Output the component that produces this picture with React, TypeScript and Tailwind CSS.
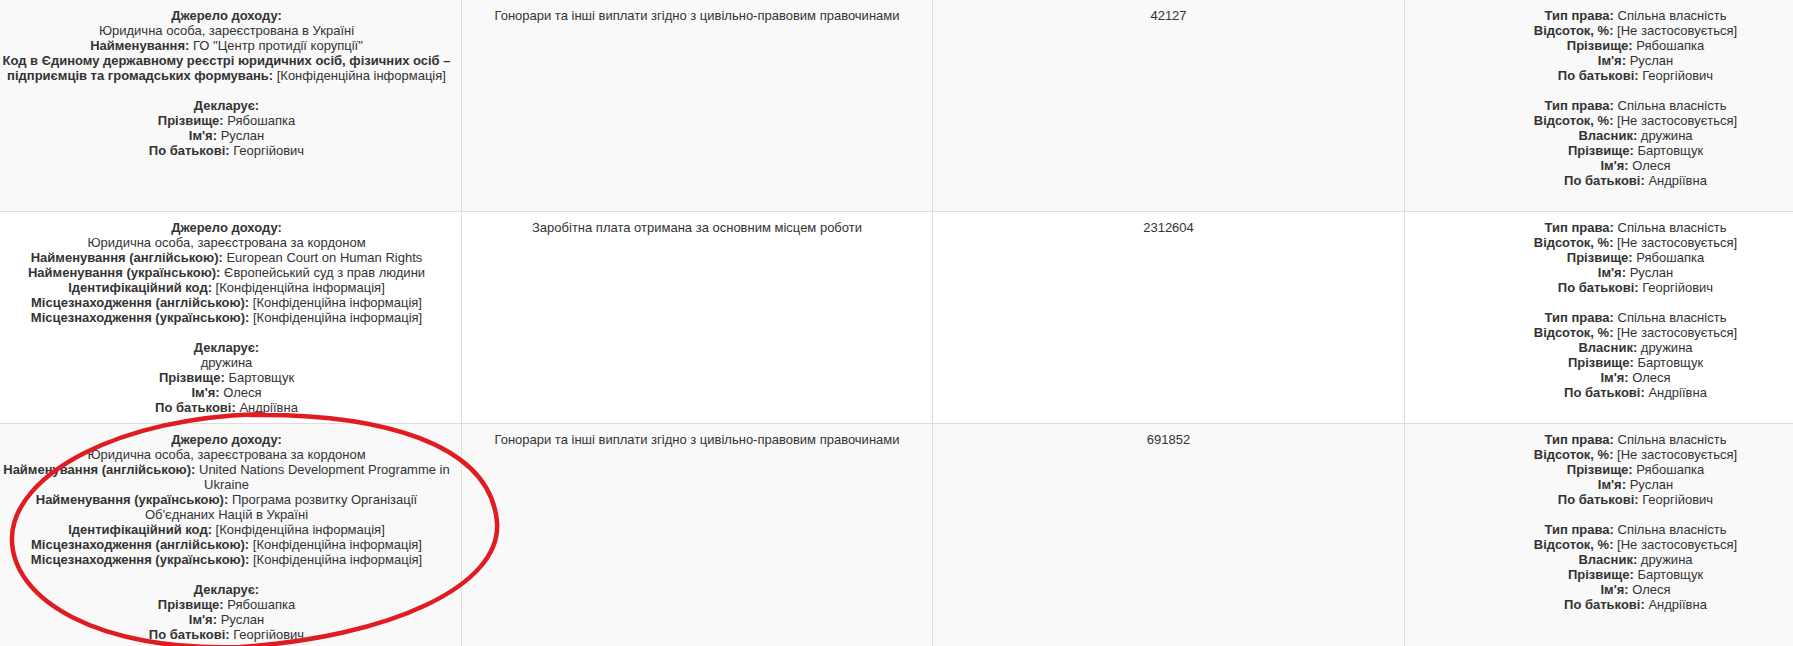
import React from "react";

type Line = { b?: string; t?: string } | null;

// label gets a colon appended, raw label is printed as is
const L = (b?: string, t?: string): Line => ({ b: b ? b + ":" : undefined, t });

const ownership: Line[] = [
  L("Тип права", "Спільна власність"),
  L("Відсоток, %", "[Не застосовується]"),
  L("Прізвище", "Рябошапка"),
  L("Ім'я", "Руслан"),
  L("По батькові", "Георгійович"),
  null,
  L("Тип права", "Спільна власність"),
  L("Відсоток, %", "[Не застосовується]"),
  L("Власник", "дружина"),
  L("Прізвище", "Бартовщук"),
  L("Ім'я", "Олеся"),
  L("По батькові", "Андріївна"),
  null,
];

const rows: { source: Line[]; kind: string; amount: string; striped: boolean }[] = [
  {
    striped: true,
    kind: "Гонорари та інші виплати згідно з цивільно-правовим правочинами",
    amount: "42127",
    source: [
      L("Джерело доходу"),
      L(undefined, "Юридична особа, зареєстрована в Україні"),
      L("Найменування", 'ГО "Центр протидії корупції"'),
      { b: "Код в Єдиному державному реєстрі юридичних осіб, фізичних осіб –" },
      { b: "підприємців та громадських формувань:", t: "[Конфіденційна інформація]" },
      null,
      L("Декларує"),
      L("Прізвище", "Рябошапка"),
      L("Ім'я", "Руслан"),
      L("По батькові", "Георгійович"),
    ],
  },
  {
    striped: false,
    kind: "Заробітна плата отримана за основним місцем роботи",
    amount: "2312604",
    source: [
      L("Джерело доходу"),
      L(undefined, "Юридична особа, зареєстрована за кордоном"),
      L("Найменування (англійською)", "European Court on Human Rights"),
      L("Найменування (українською)", "Європейський суд з прав людини"),
      L("Ідентифікаційний код", "[Конфіденційна інформація]"),
      L("Місцезнаходження (англійською)", "[Конфіденційна інформація]"),
      L("Місцезнаходження (українською)", "[Конфіденційна інформація]"),
      null,
      L("Декларує"),
      L(undefined, "дружина"),
      L("Прізвище", "Бартовщук"),
      L("Ім'я", "Олеся"),
      L("По батькові", "Андріївна"),
    ],
  },
  {
    striped: true,
    kind: "Гонорари та інші виплати згідно з цивільно-правовим правочинами",
    amount: "691852",
    source: [
      L("Джерело доходу"),
      L(undefined, "Юридична особа, зареєстрована за кордоном"),
      L("Найменування (англійською)", "United Nations Development Programme in"),
      L(undefined, "Ukraine"),
      L("Найменування (українською)", "Програма розвитку Організації"),
      L(undefined, "Об'єднаних Націй в Україні"),
      L("Ідентифікаційний код", "[Конфіденційна інформація]"),
      L("Місцезнаходження (англійською)", "[Конфіденційна інформація]"),
      L("Місцезнаходження (українською)", "[Конфіденційна інформація]"),
      null,
      L("Декларує"),
      L("Прізвище", "Рябошапка"),
      L("Ім'я", "Руслан"),
      L("По батькові", "Георгійович"),
    ],
  },
];

function Lines({ lines }: { lines: Line[] }) {
  return (
    <>
      {lines.map((l, i) =>
        l === null ? (
          <div key={i} className="h-[15px]" />
        ) : (
          <div key={i} className="whitespace-nowrap">
            {l.b && <b className="font-bold">{l.b}</b>}
            {l.b && l.t ? " " : ""}
            {l.t}
          </div>
        )
      )}
    </>
  );
}

export default function App() {
  return (
    <div
      className="relative w-[1793px] h-[646px] overflow-hidden bg-white text-[#333] text-[13px] leading-[15px]"
      style={{ fontFamily: '"Liberation Sans", Arial, sans-serif' }}
    >
      {rows.map((r, i) => (
        <div
          key={i}
          className={`flex w-[1866px] border-b border-[#ddd] ${r.striped ? "bg-[#f9f9f9]" : "bg-white"}`}
        >
          <div className="w-[462px] shrink-0 border-r border-[#ddd] pt-2 pb-2 pr-2 text-center">
            <Lines lines={r.source} />
          </div>
          <div className="w-[471px] shrink-0 border-r border-[#ddd] p-2 text-center">{r.kind}</div>
          <div className="w-[472px] shrink-0 border-r border-[#ddd] p-2 text-center">{r.amount}</div>
          <div className="w-[461px] shrink-0 p-2 text-center">
            <Lines lines={ownership} />
          </div>
        </div>
      ))}

      {/* hand-drawn red marker round the third source */}
      <svg className="pointer-events-none absolute left-0 top-0" width="1793" height="646" viewBox="0 0 1793 646">
        <path
          d="M 250 415 C 380 413, 490 443, 497 522 C 502 586, 390 637, 240 647 C 100 652, 10 600, 12 537 C 14 474, 120 417, 262 414"
          fill="none"
          stroke="#e11b22"
          strokeWidth="4.5"
          strokeLinecap="round"
        />
      </svg>
    </div>
  );
}
